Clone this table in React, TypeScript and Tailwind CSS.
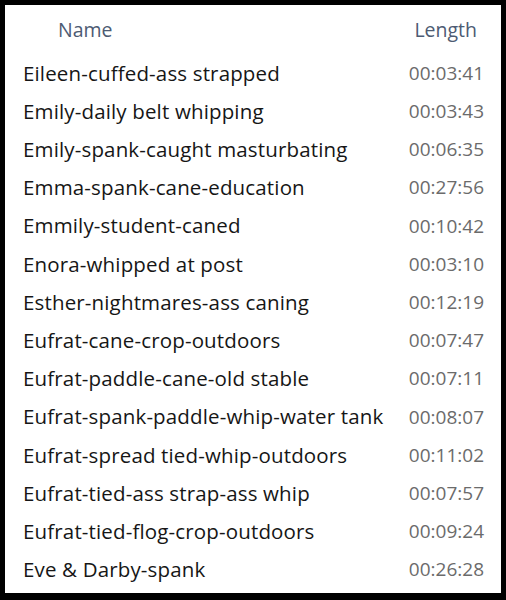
import React from 'react'

const files = [
  ['Eileen-cuffed-ass strapped', '00:03:41'],
  ['Emily-daily belt whipping', '00:03:43'],
  ['Emily-spank-caught masturbating', '00:06:35'],
  ['Emma-spank-cane-education', '00:27:56'],
  ['Emmily-student-caned', '00:10:42'],
  ['Enora-whipped at post', '00:03:10'],
  ['Esther-nightmares-ass caning', '00:12:19'],
  ['Eufrat-cane-crop-outdoors', '00:07:47'],
  ['Eufrat-paddle-cane-old stable', '00:07:11'],
  ['Eufrat-spank-paddle-whip-water tank', '00:08:07'],
  ['Eufrat-spread tied-whip-outdoors', '00:11:02'],
  ['Eufrat-tied-ass strap-ass whip', '00:07:57'],
  ['Eufrat-tied-flog-crop-outdoors', '00:09:24'],
  ['Eve & Darby-spank', '00:26:28'],
]

function App() {
  return (
    <div className="w-[506px] h-[600px] bg-black pt-[5px] pl-[5px] pr-[5px] pb-[7px]" style={{ fontFamily: '"Open Sans", sans-serif' }}>
      <div className="h-full bg-white flex flex-col">
        <div className="h-[49px] flex items-center justify-between pl-[53px] pr-[24px] text-[19.5px] text-[#4d5b73]">
          <span>Name</span>
          <span>Length</span>
        </div>
        {files.map(([name, len]) => (
          <div key={name} className="h-[38.2px] flex items-center justify-between pl-[18px] pr-[17px]">
            <span className="text-[20.5px] font-medium tracking-[0.15px] text-[#161616]">{name}</span>
            <span className="text-[19px] text-[#6b6b6b]">{len}</span>
          </div>
        ))}
      </div>
    </div>
  )
}

export default App
